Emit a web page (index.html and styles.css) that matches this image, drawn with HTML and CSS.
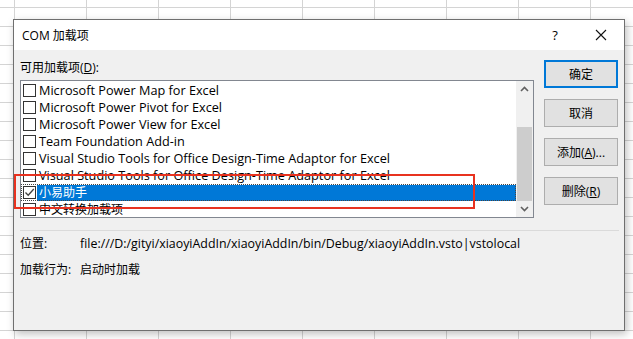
FILE: index.html
```html
<!DOCTYPE html>
<html lang="zh-CN">

<head>
    <meta charset="UTF-8">
    <title>COM 加载项</title>
    <link rel="stylesheet" href="styles.css">
</head>

<body>
    <div class="dialog">
        <div class="titlebar">
            <span class="title">COM 加载项</span>
            <span class="help">?</span>
            <span class="close">
                <svg width="12" height="12" viewBox="0 0 12 12">
                    <path d="M1 1L11 11M11 1L1 11" stroke="#111" stroke-width="1.1" fill="none" />
                </svg>
            </span>
        </div>

        <div class="dialog-body">
            <div class="main">
                <div class="list-area">
                    <div class="label">可用加载项(<u>D</u>):</div>
                    <div class="listbox">
                        <div class="items">
                            <div class="item"><span class="box"></span><span class="name">Microsoft Power Map for Excel</span></div>
                            <div class="item"><span class="box"></span><span class="name">Microsoft Power Pivot for Excel</span></div>
                            <div class="item"><span class="box"></span><span class="name">Microsoft Power View for Excel</span></div>
                            <div class="item"><span class="box"></span><span class="name">Team Foundation Add-in</span></div>
                            <div class="item"><span class="box"></span><span class="name">Visual Studio Tools for Office Design-Time Adaptor for Excel</span></div>
                            <div class="item"><span class="box"></span><span class="name">Visual Studio Tools for Office Design-Time Adaptor for Excel</span></div>
                            <div class="item selected">
                                <span class="box">
                                    <svg width="11" height="11" viewBox="0 0 11 11">
                                        <path d="M1.5 5.5L4.2 8.3L9.8 2" stroke="#404040" stroke-width="1.3" fill="none" />
                                    </svg>
                                </span>
                                <span class="name cjk">小易助手</span>
                            </div>
                            <div class="item"><span class="box"></span><span class="name cjk">中文转换加载项</span></div>
                        </div>
                        <div class="scrollbar">
                            <div class="arrow">
                                <svg width="9" height="6" viewBox="0 0 9 6">
                                    <path d="M1 5L4.5 1.5L8 5" stroke="#606060" stroke-width="1.6" fill="none" />
                                </svg>
                            </div>
                            <div class="track">
                                <div class="thumb"></div>
                            </div>
                            <div class="arrow">
                                <svg width="9" height="6" viewBox="0 0 9 6">
                                    <path d="M1 1L4.5 4.5L8 1" stroke="#606060" stroke-width="1.6" fill="none" />
                                </svg>
                            </div>
                        </div>
                    </div>
                </div>

                <div class="buttons">
                    <button class="btn default">确定</button>
                    <button class="btn">取消</button>
                    <button class="btn">添加(<u>A</u>)...</button>
                    <button class="btn">删除(<u>R</u>)</button>
                </div>
            </div>

            <div class="separator"></div>

            <div class="info">
                <div class="info-row">
                    <span class="info-label">位置:</span>
                    <span class="info-value path">file:///D:/gityi/xiaoyiAddIn/xiaoyiAddIn/bin/Debug/xiaoyiAddIn.vsto|vstolocal</span>
                </div>
                <div class="info-row">
                    <span class="info-label">加载行为:</span>
                    <span class="info-value">启动时加载</span>
                </div>
            </div>
        </div>

        <div class="highlight"></div>
    </div>
</body>

</html>
```

FILE: styles.css
```css
body {
    margin: 0;
    height: 339px;
    overflow: hidden;
    font-family: "Segoe UI", "Open Sans", "Noto Sans CJK SC", sans-serif;
    font-size: 12px;
    color: #000;
    background-color: #fff;
    background-image:
        linear-gradient(to right, #d4d4d4 1px, transparent 1px),
        linear-gradient(to bottom, #d4d4d4 1px, transparent 1px);
    background-size: 72px 19px;
    background-position: 14px 7px;
}

.dialog {
    position: relative;
    width: 610px;
    height: 310px;
    margin: 19px 0 0 13px;
    background: #f0f0f0;
    border: 1px solid #6f6f6f;
    box-shadow: 2px 3px 8px rgba(0, 0, 0, 0.25);
}

.titlebar {
    display: flex;
    align-items: center;
    height: 30px;
    padding-left: 8px;
    background: #fff;
}

.title {
    flex: 1;
}

.help {
    width: 46px;
    padding-left: 3px;
    text-align: center;
    font-size: 13px;
}

.close {
    display: flex;
    justify-content: center;
    width: 46px;
}

.dialog-body {
    padding: 10px 5px 0 6px;
}

.main {
    display: flex;
    align-items: flex-start;
}

.label {
    height: 16px;
    line-height: 16px;
    margin-bottom: 4px;
}

.listbox {
    display: flex;
    width: 512px;
    height: 136px;
    background: #fff;
    border: 1px solid #828790;
}

.items {
    flex: 1;
    padding-top: 1px;
    overflow: hidden;
}

.item {
    display: flex;
    align-items: center;
    height: 17px;
    padding-left: 2px;
    white-space: nowrap;
}

.box {
    display: flex;
    align-items: center;
    justify-content: center;
    flex-shrink: 0;
    width: 11px;
    height: 11px;
    margin-right: 1px;
    background: #fff;
    border: 1px solid #333;
}

.name {
    padding-left: 2px;
    font-size: 12.7px;
    line-height: 17px;
}

.name.cjk {
    font-size: 12px;
}

.item.selected {
    outline: 1px dotted #444;
    outline-offset: -1px;
}

.item.selected .name {
    flex: 1;
    height: 16px;
    line-height: 16px;
    color: #fff;
    background: #0078d7;
}

.scrollbar {
    display: flex;
    flex-direction: column;
    width: 17px;
    background: #f0f0f0;
}

.arrow {
    display: flex;
    align-items: center;
    justify-content: center;
    height: 17px;
}

.track {
    flex: 1;
    padding-top: 29px;
}

.thumb {
    width: 15px;
    height: 74px;
    margin-left: 1px;
    background: #cdcdcd;
}

.buttons {
    display: flex;
    flex-direction: column;
    gap: 11px;
    margin-left: 10px;
}

.btn {
    width: 74px;
    height: 28px;
    padding: 0;
    font: inherit;
    background: #e1e1e1;
    border: 1px solid #adadad;
}

.btn.default {
    border: 2px solid #0078d7;
}

.separator {
    height: 1px;
    margin-top: 12px;
    background: #dadada;
}

.info {
    display: flex;
    flex-direction: column;
    gap: 10px;
    margin-top: 5px;
}

.info-row {
    display: flex;
    height: 16px;
    line-height: 16px;
}

.info-label {
    width: 60px;
}

.path {
    font-size: 12.4px;
}

.highlight {
    position: absolute;
    left: 0;
    top: 154px;
    width: 457px;
    height: 31px;
    border: 2px solid #e8321f;
}
```
